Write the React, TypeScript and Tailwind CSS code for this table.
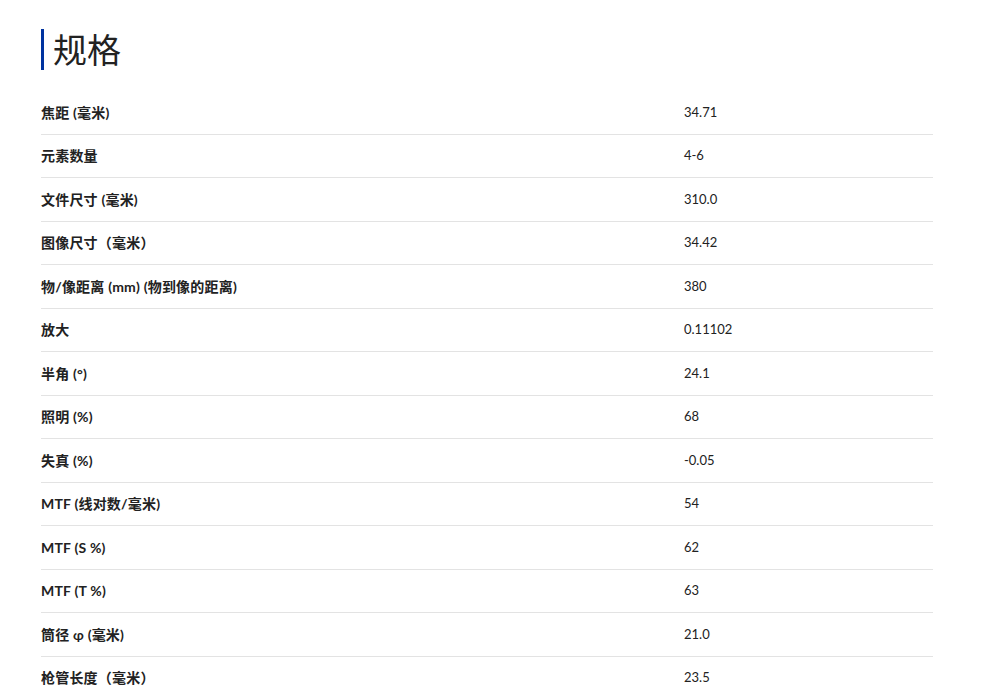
import React from "react";

const rows: [string, string][] = [
  ["焦距 (毫米)", "34.71"],
  ["元素数量", "4-6"],
  ["文件尺寸 (毫米)", "310.0"],
  ["图像尺寸（毫米）", "34.42"],
  ["物/像距离 (mm) (物到像的距离)", "380"],
  ["放大", "0.11102"],
  ["半角 (°)", "24.1"],
  ["照明 (%)", "68"],
  ["失真 (%)", "-0.05"],
  ["MTF (线对数/毫米)", "54"],
  ["MTF (S %)", "62"],
  ["MTF (T %)", "63"],
  ["筒径 φ (毫米)", "21.0"],
  ["枪管长度（毫米）", "23.5"],
];

export default function App() {
  return (
    <div
      className="min-h-[695px] bg-white text-[#222]"
      style={{ fontFamily: 'Lato, "Noto Sans CJK SC", sans-serif' }}
    >
      <div className="pl-[41px] pt-[29px] w-[933px]">
        <div className="flex items-center h-[41px] border-l-[3px] border-[#0033a0] pl-[9px]">
          <h1 className="text-[34px] leading-none font-normal text-[#222]">规格</h1>
        </div>
        <div className="mt-[21px]">
          {rows.map(([k, v], i) => (
            <div
              key={i}
              className="grid grid-cols-[643px_1fr] items-center h-[43.5px] border-b border-[#e3e3e3]"
            >
              <div className="font-bold text-[14px] tracking-[0.2px]">{k}</div>
              <div className="text-[13px]">{v}</div>
            </div>
          ))}
        </div>
      </div>
    </div>
  );
}
